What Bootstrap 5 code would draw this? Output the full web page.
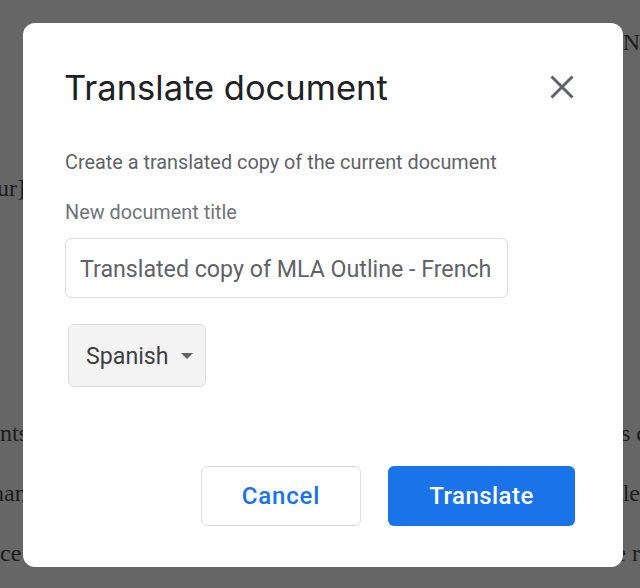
<!DOCTYPE html>
<html lang="en">
<head>
<meta charset="utf-8">
<title>Translate document</title>
<link href="https://cdn.jsdelivr.net/npm/bootstrap@5.3.0/dist/css/bootstrap.min.css" rel="stylesheet">
<style>
html,body{height:100%;}
body{background:#666;font-family:Roboto,"Liberation Sans",sans-serif;overflow:hidden;}
.doc-page{height:588px;width:640px;overflow:hidden;font-family:"Liberation Serif",serif;font-size:24px;line-height:28px;color:#1c1c1c;padding-top:28px;}
.doc-line{white-space:nowrap;height:28px;}
.gap-a{margin-top:118px;}
.gap-b{margin-top:217px;}
.gap-c{margin-top:32px;}
.shift-s{margin-left:-3px;}
.shift-m{margin-left:-8px;}
.shift-r{margin-right:-7px;}
.dlg{position:absolute;left:23px;top:23px;width:600px;height:544px;background:#fff;border-radius:12px;padding:0 48px 41px 42px;}
.dlg-title{font-family:Inter,"Noto Sans",sans-serif;font-size:34.5px;line-height:40px;font-weight:400;color:#202124;margin:45px 0 0 -1px;letter-spacing:0;}
.dlg-x{background:none;border:0;padding:0;width:28px;height:28px;margin-top:50px;margin-right:-1px;color:#5f6368;}
.dlg-sub{font-size:19.85px;line-height:24px;color:#5f6368;margin:43px 0 0;}
.dlg-label{font-size:19.85px;line-height:24px;color:#70757a;margin:26px 0 0;display:block;}
.dlg-input.form-control{font-size:23.2px;line-height:32px;height:60px;margin-top:13px;width:443px;color:#5f6368;border:1px solid #dadce0;border-radius:6px;padding:1px 14px 0;font-family:Roboto,sans-serif;}
.lang-btn{margin:26px 0 0 3px;height:63px;width:138px;background:#f3f3f3;border:1px solid #dadce0;border-radius:6px;font-size:23.2px;color:#3c4043;padding:2px 0 0 17px;display:flex;align-items:center;gap:12px;}
.lang-caret{width:0;height:0;border-left:6px solid transparent;border-right:6px solid transparent;border-top:6px solid #5f6368;margin-top:-1px;}
.dlg-foot{gap:27px;}
.btn-cancel.btn{width:160px;height:60px;border:1px solid #dadce0;border-radius:6px;background:#fff;color:#1a73e8;font-size:24px;font-weight:500;padding:0;letter-spacing:.8px;}
.btn-go.btn{width:187px;height:60px;border:0;border-radius:6px;background:#1a73e8;color:#fff;font-size:24px;font-weight:500;padding:0;letter-spacing:.45px;}
</style>
</head>
<body>
<div class="doc-page">
  <div class="doc-line d-flex justify-content-end"><span>N</span></div>
  <div class="doc-line gap-a"><span class="shift-s d-inline-block">ur]</span></div>
  <div class="doc-line gap-b d-flex justify-content-between"><span>nts</span><span class="shift-r">s c</span></div>
  <div class="doc-line gap-c d-flex justify-content-between"><span class="shift-m">han</span><span>le</span></div>
  <div class="doc-line gap-c d-flex justify-content-between"><span>ce</span><span>e r</span></div>
</div>
<div class="dlg d-flex flex-column" role="dialog">
  <div class="d-flex justify-content-between align-items-start">
    <h1 class="dlg-title">Translate document</h1>
    <button class="dlg-x" type="button" aria-label="Close">
      <svg viewBox="0 0 28 28" width="28" height="28"><path d="M3.5 3.5L24.5 24.5M24.5 3.5L3.5 24.5" stroke="currentColor" stroke-width="3" fill="none"/></svg>
    </button>
  </div>
  <p class="dlg-sub">Create a translated copy of the current document</p>
  <label class="dlg-label" for="t">New document title</label>
  <input id="t" class="form-control dlg-input" type="text" value="Translated copy of MLA Outline - French">
  <div class="d-flex"><button class="lang-btn" type="button">Spanish<span class="lang-caret"></span></button></div>
  <div class="d-flex justify-content-end dlg-foot mt-auto">
    <button class="btn btn-cancel" type="button">Cancel</button>
    <button class="btn btn-go" type="button">Translate</button>
  </div>
</div>
<script src="https://cdn.jsdelivr.net/npm/bootstrap@5.3.0/dist/js/bootstrap.bundle.min.js"></script>
</body>
</html>
